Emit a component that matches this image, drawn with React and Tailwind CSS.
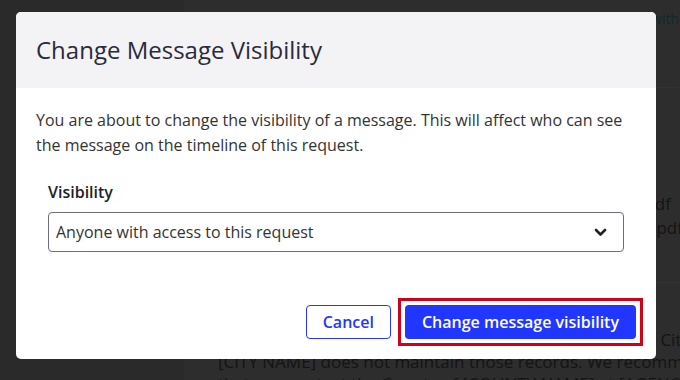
export default function App() {
  const font = { fontFamily: '"Open Sans", "Noto Sans", sans-serif' };
  return (
    <div className="relative w-[680px] h-[380px] overflow-hidden bg-[#2d2d2d]" style={font}>
      {/* background page (dimmed) */}
      <div className="absolute inset-0 flex">
        <div className="w-[184px] h-full bg-[#2a2a2a]" />
        <div className="flex-1 flex flex-col overflow-hidden text-[#141414]">
          <div className="shrink-0 h-[88px] flex justify-end items-start pt-[8px] mr-[1px] border-b border-[#333333]">
            <span className="whitespace-nowrap text-[14px] text-[#0e2a2a]">Available with</span>
          </div>
          <div className="shrink-0 h-[195px] flex flex-col items-end justify-start pt-[104px] border-b border-[#333333] text-[17px] leading-[24px]">
            <span className="whitespace-nowrap mr-[9px]">report.pdf</span>
            <span className="whitespace-nowrap mr-[-3px]">records.pdf</span>
          </div>
          <div className="shrink-0 flex flex-col pl-[34px] pt-[46px] text-[17px] leading-[22px]">
            <span className="self-end whitespace-nowrap mr-[-10px]">the City</span>
            <span className="whitespace-nowrap">[CITY NAME] does not maintain those records. We recommend</span>
            <span className="whitespace-nowrap">that you contact the County of [COUNTY NAME] at [AGENCY]</span>
          </div>
        </div>
      </div>

      {/* modal */}
      <div className="absolute left-[16px] top-[12px] w-[640px] rounded-[5px] bg-white overflow-hidden">
        <div className="bg-[#f3f3f6] px-[20px] py-[22px]">
          <h2 className="text-[24px] leading-[32px] text-[#2a2a3a]">Change Message Visibility</h2>
        </div>
        <div className="px-[20px] pt-[20px] pb-[20px]">
          <p className="text-[16px] leading-[25px] text-[#333333]">
            You are about to change the visibility of a message. This will affect who can see the message on the timeline of this request.
          </p>
          <div className="px-[12px] mt-[22px]">
            <div className="text-[16px] leading-[24px] font-semibold text-[#222222]">Visibility</div>
            <div className="mt-[8px] h-[40px] rounded-[4px] border border-[#6e6a85] flex items-center justify-between pl-[7px] pr-[16px]">
              <span className="text-[16px] text-[#333333]">Anyone with access to this request</span>
              <svg width="13" height="9" viewBox="0 0 13 9">
                <path d="M2 2 L6.5 6.5 L11 2" fill="none" stroke="#222" strokeWidth="2.6" strokeLinecap="round" strokeLinejoin="round" />
              </svg>
            </div>
          </div>
          <div className="mt-[53px] flex justify-end gap-[14px]">
            <button className="h-[34px] px-[16px] rounded-[4px] border border-[#2436ff] bg-white text-[#2436ff] text-[16px] font-semibold">
              Cancel
            </button>
            <div className="relative">
              <button className="h-[34px] px-[17px] rounded-[4px] bg-[#2137ff] text-white text-[16px] font-semibold">
                Change message visibility
              </button>
              <span className="pointer-events-none absolute -inset-[7px] border-[3px] border-[#d0021b]" />
            </div>
          </div>
        </div>
      </div>
    </div>
  );
}
